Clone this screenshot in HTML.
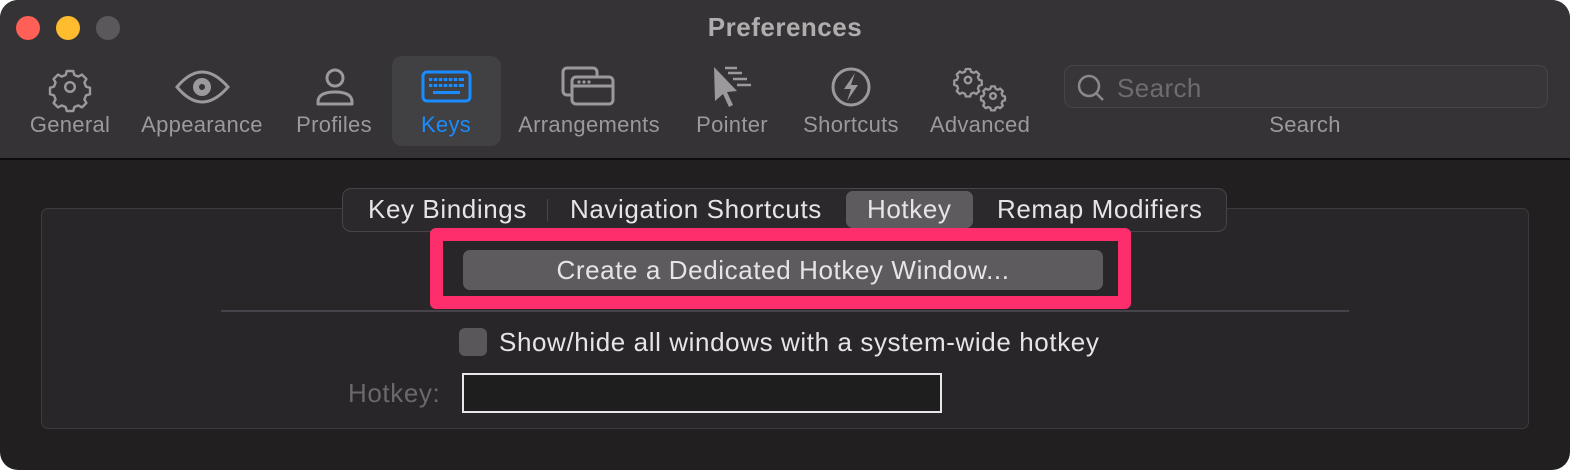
<!DOCTYPE html>
<html><head><meta charset="utf-8"><style>
*{margin:0;padding:0;box-sizing:border-box}
body{width:1570px;height:470px;background:#fff;position:relative;overflow:hidden;font-family:"Liberation Sans",sans-serif}
.win{position:absolute;left:0;top:0;width:1570px;height:470px;border-radius:18px;background:#221f21;overflow:hidden}
.tb{position:absolute;left:0;top:0;width:1570px;height:160px;background:#353335;border-bottom:2px solid #0e0d0e}
.a{position:absolute}
.lbl{position:absolute;top:112px;font-size:22px;letter-spacing:0.3px;color:#9b999b;transform:translateX(-50%);white-space:nowrap}
.t{position:absolute;font-size:26px;letter-spacing:0.6px;color:#e6e4e6;white-space:nowrap}
</style></head><body>
<div class="win">
<div class="tb"></div>
<div class="a" style="left:16px;top:16px;width:24px;height:24px;border-radius:50%;background:#fe5f57"></div>
<div class="a" style="left:56px;top:16px;width:24px;height:24px;border-radius:50%;background:#febc2e"></div>
<div class="a" style="left:96px;top:16px;width:24px;height:24px;border-radius:50%;background:#5b585b"></div>
<div class="a" style="left:0;width:1570px;top:12px;text-align:center;font-size:26px;letter-spacing:0.5px;font-weight:bold;color:#b0adaf">Preferences</div>
<div class="a" style="left:392px;top:56px;width:109px;height:90px;border-radius:10px;background:#414042"></div>
<div class="lbl" style="left:70px">General</div>
<div class="lbl" style="left:202px">Appearance</div>
<div class="lbl" style="left:334px">Profiles</div>
<div class="lbl" style="left:446px;color:#1a8cff">Keys</div>
<div class="lbl" style="left:589px">Arrangements</div>
<div class="lbl" style="left:732px">Pointer</div>
<div class="lbl" style="left:851px">Shortcuts</div>
<div class="lbl" style="left:980px">Advanced</div>
<div class="lbl" style="left:1305px">Search</div>
<div class="a" style="left:1064px;top:65px;width:484px;height:43px;border:1.5px solid #47454a;border-radius:9px;background:#383638"></div>
<div class="a" style="left:1117px;top:73px;font-size:26px;letter-spacing:0.4px;color:#6e6c6e">Search</div>
<svg class="a" style="left:0;top:0" width="1570" height="160" fill="none" stroke="#9b999b" stroke-width="3">
<circle cx="1089" cy="86" r="10" stroke="#8a888a" stroke-width="2.5"/><path d="M1096 93l7 7" stroke="#8a888a" stroke-width="2.5"/>
<g transform="translate(70,87) scale(0.8)">
<path d="M-4-20h8l1.5 5 5 2 4.5-2.5 5.5 5.5-2.5 4.5 2 5 5 1.5v8l-5 1.5-2 5 2.5 4.5-5.5 5.5-4.5-2.5-5 2-1.5 5h-8l-1.5-5-5-2-4.5 2.5-5.5-5.5 2.5-4.5-2-5-5-1.5v-8l5-1.5 2-5-2.5-4.5 5.5-5.5 4.5 2.5 5-2z" stroke-linejoin="round" stroke-width="3"/>
<circle r="6" stroke-width="3"/></g>
<path d="M177 87q25-30 51 0q-26 30-51 0z"/><circle cx="202" cy="87" r="9" fill="#9b999b" stroke="none"/><circle cx="202" cy="87" r="3" fill="#353335" stroke="none"/>
<circle cx="335" cy="78" r="8"/><path d="M318 104v-2q0-10 17-10t17 10v2z" stroke-linejoin="round"/>
<rect x="423" y="72" width="47" height="29" rx="4" stroke="#1a8cff"/>
<g fill="#1a8cff" stroke="none"><rect x="429" y="78" width="35" height="3" /><rect x="429" y="84" width="35" height="3"/><rect x="433" y="91" width="27" height="3"/></g>
<g stroke="#3a3a3a" stroke-width="1.3"><path d="M433 77v11M438 77v11M443 77v11M448 77v11M453 77v11M458 77v11"/></g>
<rect x="563" y="68" width="34" height="27" rx="4"/><rect x="572" y="77" width="41" height="27" rx="4" fill="#353335"/><path d="M572 86h41"/><g fill="#9b999b" stroke="none"><circle cx="579" cy="82" r="1.6"/><circle cx="584" cy="82" r="1.6"/><circle cx="589" cy="82" r="1.6"/></g>
<path d="M714 67l23 24-10 1 6 13-4 2-6-13-8 7z" fill="#9b999b" stroke="none"/>
<path d="M725 68h12M728 73h14M733 79h14M737 85h14" stroke-width="2.5"/>
<circle cx="851" cy="87" r="18"/><path d="M855 73l-11 16h7l-4 12 11-16h-7z" fill="#9b999b" stroke="none"/>
<g transform="translate(968,80) scale(0.55)"><path d="M-4-20h8l1.5 5 5 2 4.5-2.5 5.5 5.5-2.5 4.5 2 5 5 1.5v8l-5 1.5-2 5 2.5 4.5-5.5 5.5-4.5-2.5-5 2-1.5 5h-8l-1.5-5-5-2-4.5 2.5-5.5-5.5 2.5-4.5-2-5-5-1.5v-8l5-1.5 2-5-2.5-4.5 5.5-5.5 4.5 2.5 5-2z" stroke-width="4.2" stroke-linejoin="round"/><circle r="6" stroke-width="4.2"/></g>
<g transform="translate(993,96) scale(0.48)"><path d="M-4-20h8l1.5 5 5 2 4.5-2.5 5.5 5.5-2.5 4.5 2 5 5 1.5v8l-5 1.5-2 5 2.5 4.5-5.5 5.5-4.5-2.5-5 2-1.5 5h-8l-1.5-5-5-2-4.5 2.5-5.5-5.5 2.5-4.5-2-5-5-1.5v-8l5-1.5 2-5-2.5-4.5 5.5-5.5 4.5 2.5 5-2z" stroke-width="4.8" stroke-linejoin="round"/><circle r="6" stroke-width="4.8"/></g>
</svg>
<div class="a" style="left:41px;top:208px;width:1488px;height:221px;border:1.5px solid #3e3b3e;border-radius:7px;background:#29262a"></div>
<div class="a" style="left:342px;top:188px;width:885px;height:44px;border:1.5px solid #48454a;border-radius:9px;background:#2c292c"></div>
<div class="a" style="left:846px;top:191px;width:127px;height:37px;border-radius:7px;background:#5e5b5e"></div>
<div class="a" style="left:547px;top:199px;width:1px;height:22px;background:#49464a"></div>
<div class="t" style="left:368px;top:194px">Key Bindings</div>
<div class="t" style="left:570px;top:194px">Navigation Shortcuts</div>
<div class="t" style="left:867px;top:194px">Hotkey</div>
<div class="t" style="left:997px;top:194px">Remap Modifiers</div>
<div class="a" style="left:221px;top:310px;width:1128px;height:1.5px;background:#46434a"></div>
<div class="a" style="left:430px;top:228px;width:701px;height:81px;border:13px solid #fe2e6d;border-radius:6px"></div>
<div class="a" style="left:463px;top:250px;width:640px;height:40px;border-radius:7px;background:#5e5b5e"></div>
<div class="t" style="left:463px;width:640px;top:255px;text-align:center">Create a Dedicated Hotkey Window...</div>
<div class="a" style="left:459px;top:328px;width:28px;height:28px;border-radius:6px;background:#5a575a"></div>
<div class="t" style="left:499px;top:327px">Show/hide all windows with a system-wide hotkey</div>
<div class="t" style="left:348px;top:378px;color:#6b686b">Hotkey:</div>
<div class="a" style="left:462px;top:373px;width:480px;height:40px;border:2px solid #e8e6e8;background:#1f1e1f"></div>
</div>
</body></html>
